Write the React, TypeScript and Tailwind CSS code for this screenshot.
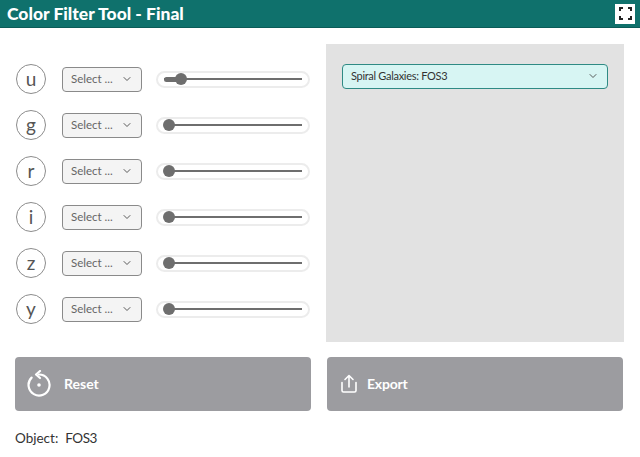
import { ChevronDown } from 'lucide-react'

const BANDS = [
  { name: 'u', value: 'w-[17px]' },
  { name: 'g', value: 'w-[5px]' },
  { name: 'r', value: 'w-[5px]' },
  { name: 'i', value: 'w-[5px]' },
  { name: 'z', value: 'w-[5px]' },
  { name: 'y', value: 'w-[5px]' },
]

function BandRow({ name, value }: { name: string; value: string }) {
  return (
    <div className="flex h-[30px] items-center">
      <div className="flex h-[30px] w-[30px] items-center justify-center rounded-full border border-[#8c8c8c] bg-white pb-[2px] text-[19px] leading-none text-[#555]">
        {name}
      </div>
      <div className="ml-[16px] flex h-[25px] w-[80px] items-center justify-between rounded-[4px] border border-[#8a8a8a] bg-[#f4f4f4] pb-[1px] pl-[8px] pr-[8px] text-[11.5px] text-[#666]">
        <span>Select ...</span>
        <ChevronDown size={12} strokeWidth={1.75} className="text-[#444]" />
      </div>
      <div className="ml-[14px] flex h-[17px] w-[154px] items-center rounded-full border-2 border-[#ececec] bg-white px-[6px]">
        <div className="flex h-[2px] w-full items-center bg-[#6e6e6e]">
          <div className={`h-[5px] rounded-l-full bg-[#6e6e6e] ${value}`} />
          <div className="-ml-[6px] h-[12px] w-[12px] shrink-0 rounded-full bg-[#6e6e6e]" />
        </div>
      </div>
    </div>
  )
}

export default function App() {
  return (
    <div className="h-[457px] w-[640px] overflow-hidden bg-white font-['Lato',sans-serif]">
      <header className="flex h-[28px] items-center justify-between border-b border-[#0b5c58] bg-[#0f716c] pl-[7px] pr-[5px]">
        <h1 className="text-[17.5px] font-black leading-none text-white">Color Filter Tool - Final</h1>
        <div className="flex h-[20px] w-[20px] items-center justify-center bg-white">
          <svg width="13" height="13" viewBox="0 0 13 13" fill="none" stroke="#222" strokeWidth="2">
            <path d="M1 4V1h3M9 1h3v3M12 9v3H9M4 12H1V9" />
          </svg>
        </div>
      </header>

      <main className="flex gap-[15px] pl-[15px] pt-[16px]">
        <div className="w-[296px] pl-[1px] pt-[20px]">
          <div className="flex flex-col gap-[16px]">
            {BANDS.map((band) => (
              <BandRow key={band.name} name={band.name} value={band.value} />
            ))}
          </div>
        </div>
        <div className="h-[298px] w-[298px] bg-[#e2e2e2] px-[16px] pt-[20px]">
          <div className="flex h-[25px] items-center justify-between rounded-[4px] border border-[#2f8a84] bg-[#d7f5f3] pb-[1px] pl-[8px] pr-[8px] text-[11px] tracking-[-0.3px] text-[#333]">
            <span>Spiral Galaxies: FOS3</span>
            <ChevronDown size={12} strokeWidth={1.75} className="text-[#444]" />
          </div>
        </div>
      </main>

      <div className="mt-[15px] flex gap-[16px] pl-[15px]">
        <button className="flex h-[54px] w-[296px] items-center rounded-[4px] bg-[#9c9ca0] pb-[1px] pl-[12px] text-[14px] font-bold text-white">
          <svg width="24" height="28" viewBox="0 0 24 28" fill="none" stroke="white" strokeWidth="2.2" strokeLinecap="round" strokeLinejoin="round">
            <path d="M12 4.500A10.500 10.500 0 1 1 4.600 7.600" />
            <path d="M13 1 9 4.500 13 8" />
            <circle cx="12" cy="15" r="1.800" fill="white" stroke="none" />
          </svg>
          <span className="ml-[13px]">Reset</span>
        </button>
        <button className="flex h-[54px] w-[296px] items-center rounded-[4px] bg-[#9c9ca0] pb-[1px] pl-[14px] text-[14px] font-bold text-white">
          <svg width="16" height="19" viewBox="0 0 16 19" fill="none" stroke="white" strokeWidth="1.600" strokeLinecap="round" strokeLinejoin="round">
            <path d="M8 13V1.500M4 5.500l4-4 4 4" />
            <path d="M1 8.500V16.500A1.500 1.500 0 0 0 2.500 18h11a1.500 1.500 0 0 0 1.500-1.500V8.500" />
          </svg>
          <span className="ml-[10px] tracking-[-0.2px]">Export</span>
        </button>
      </div>

      <p className="mt-[17px] flex gap-[7px] pl-[15px] text-[13.5px] leading-[20px] text-[#333]">
        <span>Object:</span>
        <span className="tracking-[-0.5px]">FOS3</span>
      </p>
    </div>
  )
}
